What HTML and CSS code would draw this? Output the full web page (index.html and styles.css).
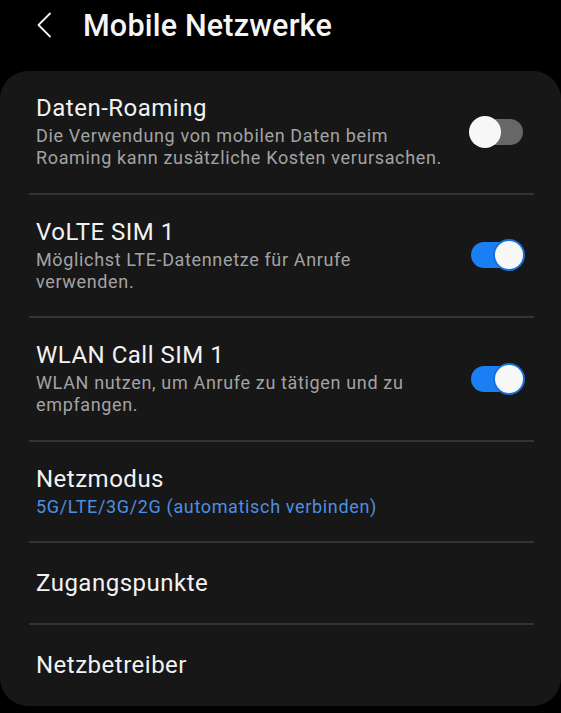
FILE: index.html
```html
<!DOCTYPE html>
<html lang="de">
<head>
    <meta charset="UTF-8">
    <meta name="viewport" content="width=device-width, initial-scale=1.0">
    <title>Mobile Netzwerke</title>
    <link rel="stylesheet" href="styles.css">
</head>
<body>
    <header class="top-bar">
        <button class="back-button" aria-label="Zurück">
            <svg width="16" height="26" viewBox="0 0 16 26">
                <path d="M14 1.5 L2.5 13 L14 24.5" fill="none" stroke="#f2f2f2" stroke-width="1.8" stroke-linecap="round" stroke-linejoin="round"/>
            </svg>
        </button>
        <h1 class="page-title">Mobile Netzwerke</h1>
    </header>

    <main class="settings-card">
        <div class="setting-row">
            <div class="setting-text">
                <p class="setting-title">Daten-Roaming</p>
                <p class="setting-summary">Die Verwendung von mobilen Daten beim Roaming kann zusätzliche Kosten verursachen.</p>
            </div>
            <span class="switch"></span>
        </div>

        <div class="setting-row">
            <div class="setting-text">
                <p class="setting-title">VoLTE SIM 1</p>
                <p class="setting-summary">Möglichst LTE-Datennetze für Anrufe verwenden.</p>
            </div>
            <span class="switch on"></span>
        </div>

        <div class="setting-row">
            <div class="setting-text">
                <p class="setting-title">WLAN Call SIM 1</p>
                <p class="setting-summary">WLAN nutzen, um Anrufe zu tätigen und zu empfangen.</p>
            </div>
            <span class="switch on"></span>
        </div>

        <div class="setting-row">
            <div class="setting-text">
                <p class="setting-title">Netzmodus</p>
                <p class="setting-summary value">5G/LTE/3G/2G (automatisch verbinden)</p>
            </div>
        </div>

        <div class="setting-row single">
            <div class="setting-text">
                <p class="setting-title">Zugangspunkte</p>
            </div>
        </div>

        <div class="setting-row single">
            <div class="setting-text">
                <p class="setting-title">Netzbetreiber</p>
            </div>
        </div>
    </main>
</body>
</html>
```

FILE: styles.css
```css
body {
    margin: 0;
    background-color: #000;
    color: #f2f2f2;
    font-family: 'Roboto', 'Noto Sans', sans-serif;
    height: 713px;
    overflow: hidden;
}

.top-bar {
    display: flex;
    align-items: center;
    height: 50px;
    padding: 0 0 0 36px;
    margin-bottom: 21px;
}

.back-button {
    display: flex;
    align-items: center;
    background: none;
    border: none;
    padding: 0;
    margin-right: 31px;
    cursor: pointer;
}

.page-title {
    margin: 0;
    font-size: 30.5px;
    font-weight: 500;
    letter-spacing: 0.2px;
    color: #f5f5f5;
}

.settings-card {
    background-color: #171717;
    border-radius: 28px;
    padding: 0 27px 0 29px;
    height: 635px;
    box-sizing: border-box;
}

.setting-row {
    display: flex;
    align-items: center;
    padding: 23px 0 23.5px;
    border-bottom: 2px solid #333;
}

.setting-row:last-child {
    border-bottom: none;
}

.setting-row.single {
    padding: 26px 0;
}

.setting-text {
    flex: 1;
    padding-left: 7px;
}

.setting-title {
    margin: 0;
    font-size: 24px;
    line-height: 28px;
    letter-spacing: 0.5px;
    color: #f2f2f2;
}

.setting-summary {
    margin: 3px 0 0;
    font-size: 18px;
    line-height: 22px;
    letter-spacing: 0.65px;
    color: #a3a3a3;
    max-width: 408px;
}

.setting-summary.value {
    color: #4d8fe0;
}

/* toggle switch */
.switch {
    position: relative;
    width: 52px;
    height: 26px;
    border-radius: 13px;
    background-color: #676767;
    margin-right: 11px;
    flex-shrink: 0;
}

.switch::after {
    content: "";
    position: absolute;
    top: -3px;
    left: -2px;
    width: 32px;
    height: 32px;
    border-radius: 50%;
    background-color: #f7f7f7;
    box-sizing: border-box;
}

.switch.on {
    background-color: #1a7ff2;
}

.switch.on::after {
    left: auto;
    right: -2px;
    top: -3px;
    width: 32px;
    height: 32px;
    border: 2px solid #1670d8;
}
```
